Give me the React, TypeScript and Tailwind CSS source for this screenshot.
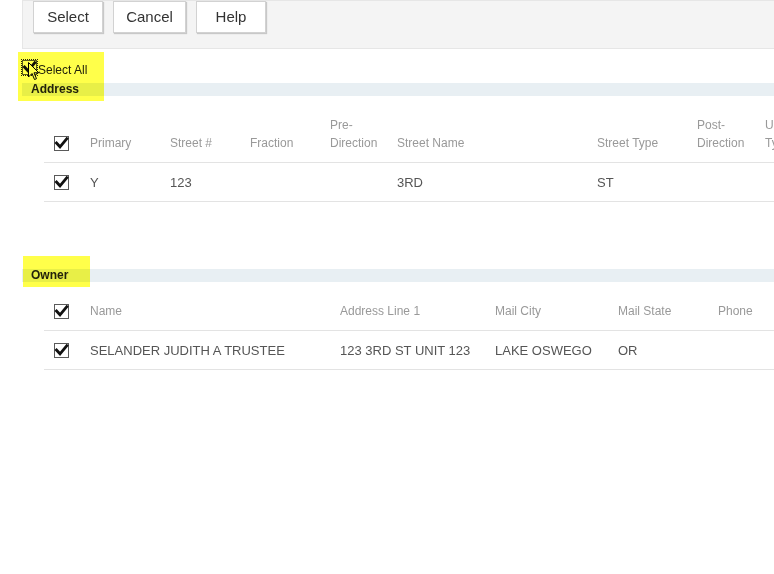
import React from 'react';

const Check = ({ focus = false }: { focus?: boolean }) => (
  <span
    className={`relative inline-block w-[15px] h-[15px] shrink-0 bg-white border border-[#5a5a5a] ${
      focus ? 'outline outline-1 outline-dotted outline-[#222] outline-offset-0' : ''
    }`}
  >
    <svg viewBox="0 0 15 15" className="absolute left-[-1px] top-[-1px] w-[15px] h-[15px] overflow-visible">
      <path d="M2.5 7 L6 10.8 L12.8 2.6" fill="none" stroke="#111" strokeWidth="2.8" strokeLinecap="square" />
    </svg>
  </span>
);

const Cursor = () => (
  <svg viewBox="0 0 12 19" className="absolute left-[28px] top-[62px] w-[12px] h-[19px]">
    <path d="M0.5 0.5 L0.5 15 L4 11.5 L6.5 17.5 L8.5 16.7 L6 10.8 L10.8 10.8 Z" fill="#fff" stroke="#000" strokeWidth="1" />
  </svg>
);

interface Col {
  label: React.ReactNode;
  w: number;
  value?: string;
}

const addressCols: Col[] = [
  { label: 'Primary', w: 80, value: 'Y' },
  { label: 'Street #', w: 80, value: '123' },
  { label: 'Fraction', w: 80, value: '' },
  { label: <>Pre-<br />Direction</>, w: 67, value: '' },
  { label: 'Street Name', w: 200, value: '3RD' },
  { label: 'Street Type', w: 100, value: 'ST' },
  { label: <>Post-<br />Direction</>, w: 68, value: '' },
  { label: <>Unit<br />Type</>, w: 80, value: '' },
];

const ownerCols: Col[] = [
  { label: 'Name', w: 250, value: 'SELANDER JUDITH A TRUSTEE' },
  { label: 'Address Line 1', w: 155, value: '123 3RD ST UNIT 123' },
  { label: 'Mail City', w: 123, value: 'LAKE OSWEGO' },
  { label: 'Mail State', w: 100, value: 'OR' },
  { label: 'Phone', w: 100, value: '' },
];

function DataTable({ cols }: { cols: Col[] }) {
  return (
    <div className="ml-[44px] mt-[20px]">
      <div className="flex items-end border-b border-[#e3e3e3] pb-[10px]">
        <div className="w-[46px] shrink-0 pl-[10px] flex items-end h-[18px] pb-[1px]">
          <Check />
        </div>
        {cols.map((c, i) => (
          <div key={i} style={{ width: c.w }} className="shrink-0 text-[12px] leading-[18px] text-[#999]">
            {c.label}
          </div>
        ))}
      </div>
      <div className="flex items-center border-b border-[#e3e3e3] h-[39px]">
        <div className="w-[46px] shrink-0 pl-[10px] flex items-center">
          <Check />
        </div>
        {cols.map((c, i) => (
          <div key={i} style={{ width: c.w }} className="shrink-0 pt-[2px] text-[13px] leading-[18px] text-[#555] whitespace-nowrap">
            {c.value}
          </div>
        ))}
      </div>
    </div>
  );
}

function SectionBar({ title }: { title: string }) {
  return (
    <div className="ml-[22px] h-[13px] bg-[#e8eff3] pl-[9px] text-[12px] leading-[13px] font-bold text-[#222]">
      {title}
    </div>
  );
}

export default function App() {
  return (
    <div className="relative w-[774px] h-[574px] overflow-hidden bg-white font-['Liberation_Sans',Arial,sans-serif]">
      <div className="w-[900px]">
        <div className="ml-[22px] h-[49px] bg-[#f4f4f4] border-t border-b border-l border-[#e6e6e6] flex items-start gap-[10px] pl-[10px]">
          {['Select', 'Cancel', 'Help'].map((b, i) => (
            <button
              key={b}
              className={`${i === 1 ? 'w-[73px]' : 'w-[70px]'} h-[32px] bg-white border border-[#d2d2d2] shadow-[1px_1px_1px_rgba(0,0,0,0.18)] text-[15px] text-[#333]`}
            >
              {b}
            </button>
          ))}
        </div>

        <div className="ml-[22px] mt-[11px] flex items-start h-[15px]">
          <Check focus />
          <span className="ml-[1px] mt-[3px] text-[12px] leading-[15px] text-[#222]">Select All</span>
        </div>

        <div className="mt-[8px]">
          <SectionBar title="Address" />
        </div>
        <DataTable cols={addressCols} />

        <div className="mt-[67px]">
          <SectionBar title="Owner" />
        </div>
        <DataTable cols={ownerCols} />
      </div>

      <Cursor />
      <div className="absolute left-[18px] top-[52px] w-[86px] h-[49px] bg-[#ffff4a] mix-blend-multiply" />
      <div className="absolute left-[23px] top-[256px] w-[67px] h-[31px] bg-[#ffff4a] mix-blend-multiply" />
    </div>
  );
}
